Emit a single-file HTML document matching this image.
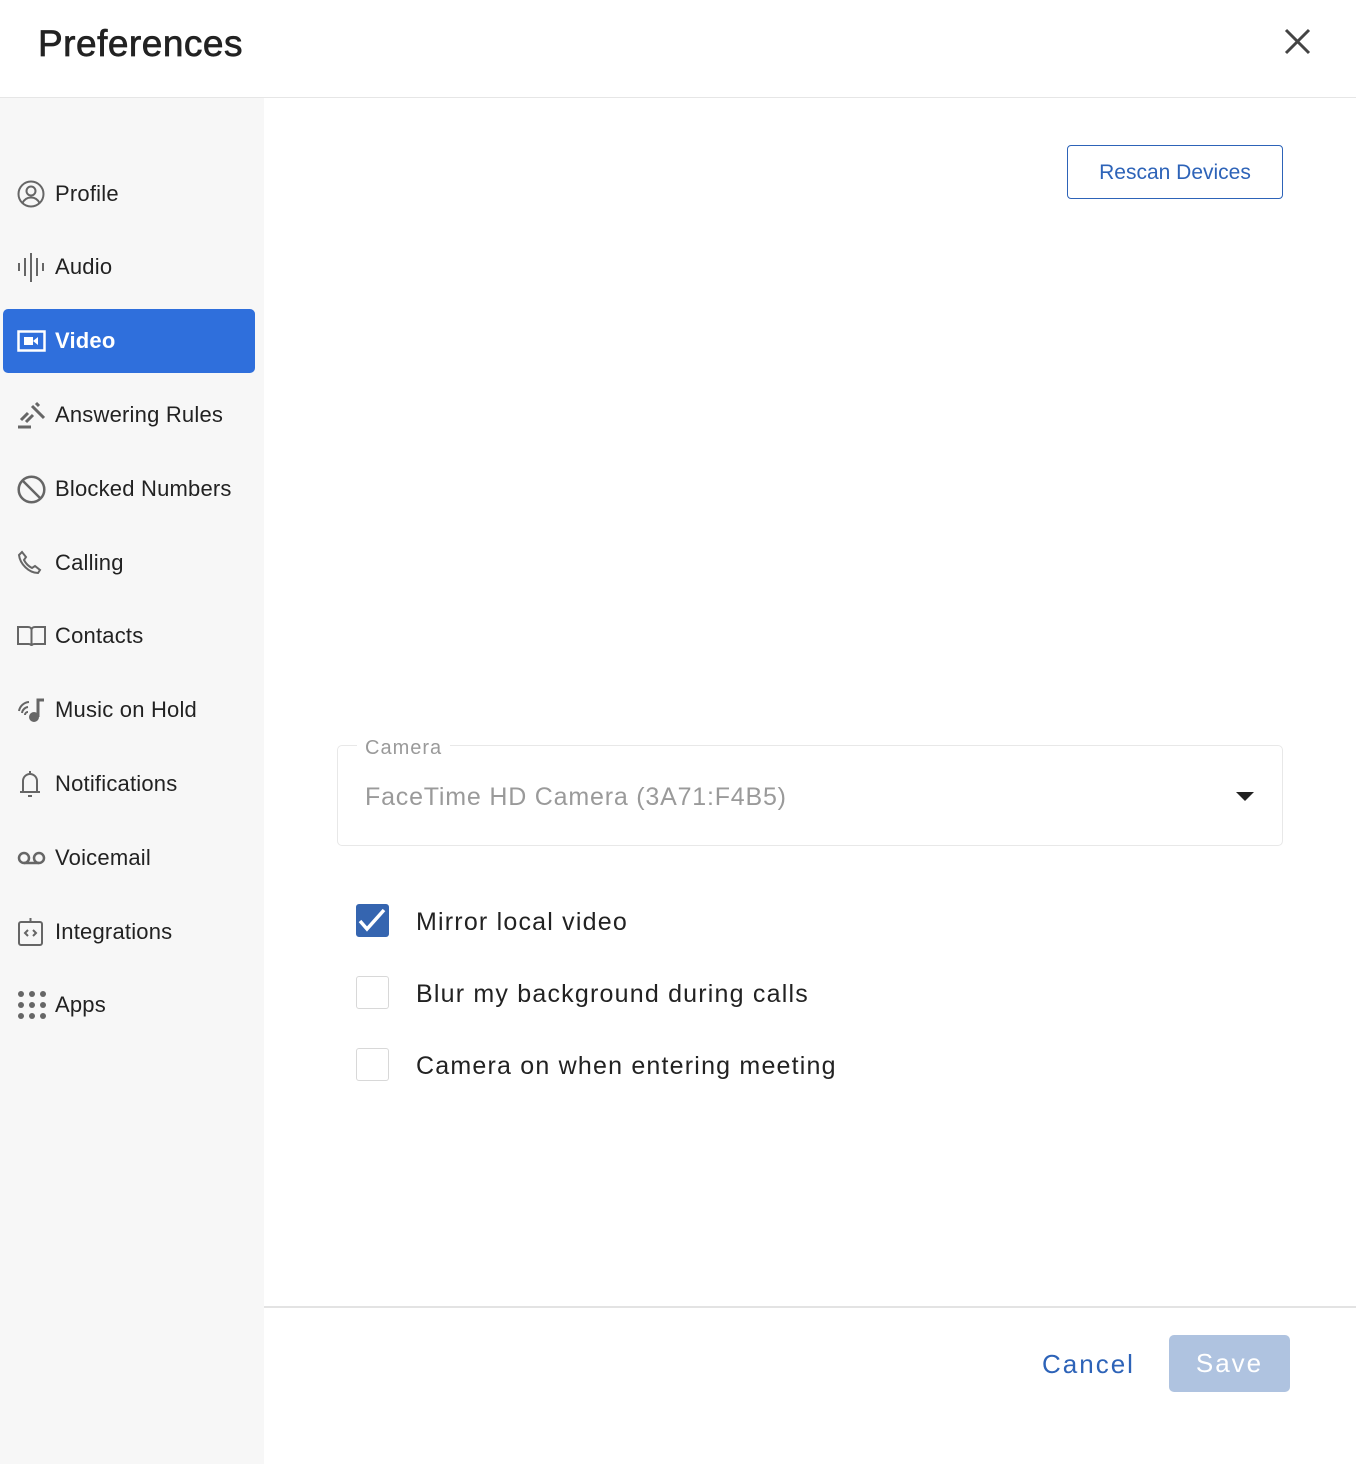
<!DOCTYPE html>
<html><head><meta charset="utf-8"><style>
*{margin:0;padding:0;box-sizing:border-box}
body{width:1356px;height:1464px;position:relative;background:#fff;font-family:"Liberation Sans",sans-serif;color:#222;overflow:hidden}
.hdr{position:absolute;left:0;top:0;width:1356px;height:98px;border-bottom:1px solid #e6e6e6}
.hdr h1{position:absolute;left:38px;top:23px;font-size:37px;font-weight:normal;color:#222;letter-spacing:0.5px;-webkit-text-stroke:0.7px #222}
.side{position:absolute;left:0;top:98px;width:264px;height:1366px;background:#f7f7f7}
.it{position:absolute;left:3px;width:252px;height:64px;display:flex;align-items:center;font-size:22px;color:#222}
.it svg{position:absolute;left:14px}
.it span{position:absolute;left:52px;letter-spacing:0.2px}
.act{background:#2f6fdc;border-radius:5px;color:#fff;font-weight:bold}
.btn{position:absolute;left:1067px;top:145px;width:216px;height:54px;border:1px solid #2d63b8;border-radius:4px;color:#2d63b8;font-size:21px;text-align:center;line-height:54px}
.field{position:absolute;left:337px;top:745px;width:946px;height:101px;border:1px solid #e8e8e8;border-radius:5px}
.lbl{position:absolute;left:357px;top:737px;background:#fff;padding:0 8px;color:#9a9a9a;font-size:20px;letter-spacing:1px}
.val{position:absolute;left:365px;top:783px;color:#9a9a9a;font-size:25px;letter-spacing:0.8px}
.cb{position:absolute;left:356px;width:33px;height:33px;border:1px solid #d8d8d8;border-radius:3px}
.cl{position:absolute;left:416px;font-size:25px;letter-spacing:1.2px;color:#222}
.foot{position:absolute;left:264px;top:1306px;width:1092px;border-top:2px solid #e3e3e3}
</style></head><body>
<div class="hdr"><h1>Preferences</h1>
<svg style="position:absolute;left:1284px;top:28px" width="27" height="27" viewBox="0 0 27 27"><path d="M2 2L25 25M25 2L2 25" stroke="#444" stroke-width="3"/></svg></div>
<div class="side">
<div class="it" style="top:64px"><svg width="28" height="28" viewBox="0 0 28 28" fill="none" stroke="#666" stroke-width="2"><circle cx="14" cy="14" r="12.5"/><circle cx="14" cy="11" r="4.5"/><path d="M5.5 23c2-4 5-5.5 8.5-5.5s6.5 1.5 8.5 5.5"/></svg><span>Profile</span></div>
<div class="it" style="top:137px"><svg width="28" height="30" viewBox="0 0 28 30" stroke="#666" stroke-width="2"><path d="M2 11v8M8 6v18M14 1v29M20 6v18M26 11v8"/></svg><span>Audio</span></div>
<div class="it act" style="top:211px"><svg width="29" height="22" viewBox="0 0 29 22" fill="none"><rect x="1.5" y="1.5" width="26" height="19" stroke="#fff" stroke-width="2.5"/><path d="M7 7h9v8H7zM16 11l5-4v8z" fill="#fff"/></svg><span>Video</span></div>
<div class="it" style="top:285px"><svg width="28" height="28" viewBox="0 0 28 28" stroke="#666" stroke-width="3"><path d="M1 26h13M4 19l7-7M9 21l7-7M15 5l12 12M19 2l3 3"/></svg><span>Answering Rules</span></div>
<div class="it" style="top:359px"><svg width="29" height="29" viewBox="0 0 29 29" fill="none" stroke="#666" stroke-width="2.5"><circle cx="14.5" cy="14.5" r="12.8"/><path d="M5.5 5.5l18 18"/></svg><span>Blocked Numbers</span></div>
<div class="it" style="top:433px"><svg width="26" height="26" viewBox="0 0 26 26" fill="none" stroke="#666" stroke-width="2"><path d="M5 2l4 5-2 3c2 4 4 6 8 8l3-2 5 4-2 3C12 23 3 14 2 5z"/></svg><span>Calling</span></div>
<div class="it" style="top:506px"><svg width="29" height="22" viewBox="0 0 29 22" fill="none" stroke="#666" stroke-width="2"><path d="M1 2h10c2 0 3.5 1 3.5 3v16c0-1.5-1.5-2-3-2H1zM28 2H18c-2 0-3.5 1-3.5 3v16c0-1.5 1.5-2 3-2H28z"/></svg><span>Contacts</span></div>
<div class="it" style="top:580px"><svg width="29" height="24" viewBox="0 0 29 24" fill="none" stroke="#666" stroke-width="2"><path d="M2 13a11 11 0 0 1 10-9M5 15a7 7 0 0 1 6-6M8 17a3 3 0 0 1 3-3"/><path d="M21 19V2h6" stroke-width="3"/><circle cx="17" cy="19" r="4" fill="#666"/></svg><span>Music on Hold</span></div>
<div class="it" style="top:654px"><svg width="26" height="30" viewBox="0 0 26 30" fill="none" stroke="#666" stroke-width="2"><path d="M13 2v2M6 22V12a7 7 0 0 1 14 0v10M3 23h20M11 27h4"/></svg><span>Notifications</span></div>
<div class="it" style="top:728px"><svg width="29" height="14" viewBox="0 0 29 14" fill="none" stroke="#666" stroke-width="2.5"><circle cx="7" cy="7" r="5"/><circle cx="22" cy="7" r="5"/><path d="M7 12h15"/></svg><span>Voicemail</span></div>
<div class="it" style="top:802px"><svg width="27" height="30" viewBox="0 0 27 30" fill="none" stroke="#666" stroke-width="2"><rect x="2" y="5" width="23" height="23" rx="2"/><path d="M13.5 1v4M11 13l-3 3 3 3M16 13l3 3-3 3"/></svg><span>Integrations</span></div>
<div class="it" style="top:875px"><svg width="30" height="30" viewBox="0 0 30 30" fill="#666"><circle cx="4" cy="4" r="3"/><circle cx="15" cy="4" r="3"/><circle cx="26" cy="4" r="3"/><circle cx="4" cy="15" r="3"/><circle cx="15" cy="15" r="3"/><circle cx="26" cy="15" r="3"/><circle cx="4" cy="26" r="3"/><circle cx="15" cy="26" r="3"/><circle cx="26" cy="26" r="3"/></svg><span>Apps</span></div>
</div>
<div class="btn">Rescan Devices</div>
<div class="field"></div>
<div class="lbl">Camera</div>
<div class="val">FaceTime HD Camera (3A71:F4B5)</div>
<svg style="position:absolute;left:1236px;top:792px" width="18" height="9" viewBox="0 0 18 9"><path d="M0 0h18L9 9z" fill="#222"/></svg>
<div class="cb" style="top:904px;background:#3565b0;border-color:#3565b0"><svg width="31" height="31" viewBox="0 0 31 31"><path d="M3 16l7 8L27 5" fill="none" stroke="#fff" stroke-width="3.5"/></svg></div>
<div class="cl" style="top:908px">Mirror local video</div>
<div class="cb" style="top:976px"></div>
<div class="cl" style="top:980px">Blur my background during calls</div>
<div class="cb" style="top:1048px"></div>
<div class="cl" style="top:1052px">Camera on when entering meeting</div>
<div class="foot"></div>
<div style="position:absolute;left:1042px;top:1349px;font-size:26px;letter-spacing:2px;color:#2d63b8">Cancel</div>
<div style="position:absolute;left:1169px;top:1335px;width:121px;height:57px;background:#afc3e0;border-radius:5px;color:#fff;font-size:26px;letter-spacing:2px;text-align:center;line-height:57px">Save</div>
</body></html>
